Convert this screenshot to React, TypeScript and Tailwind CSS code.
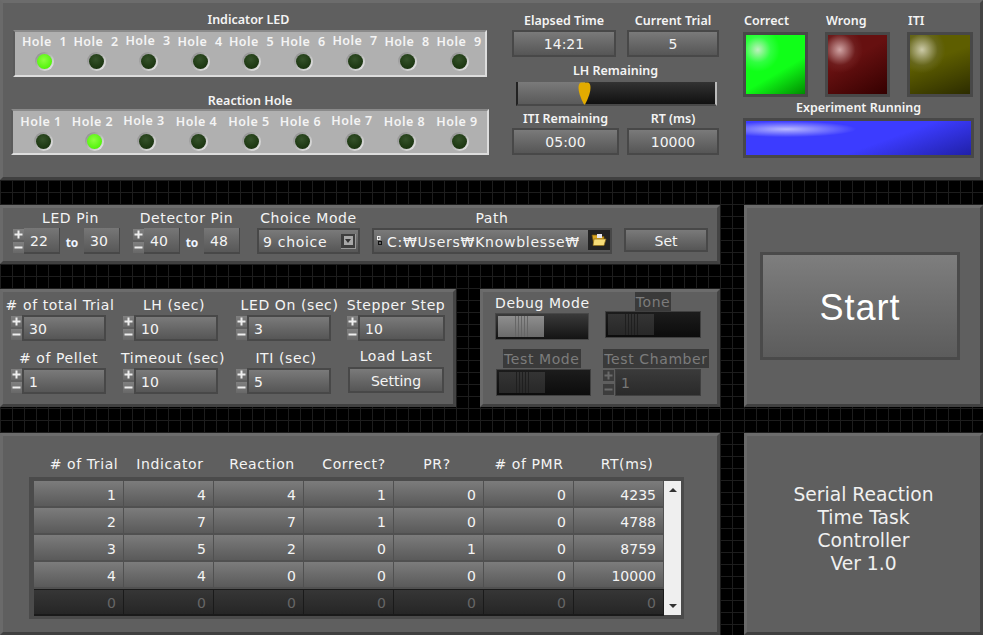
import React from "react";

const panel =
  "border-[3px] border-t-[#6c6c6c] border-l-[#6a6a6a] border-b-[#404040] border-r-[#444444] bg-[#5f5f5f]";
const raised = "border-2 border-[#484848] bg-linear-to-b from-[#7a7a7a] to-[#565656]";
const dejavu = "font-['DejaVu_Sans',sans-serif] text-[14px] text-[#f4f4f4] leading-none whitespace-nowrap";
const label = dejavu + " tracking-[0.6px]";
const tahoma = "font-['Noto_Sans',sans-serif] font-semibold text-[12.5px] text-[#f4f4f4] leading-none whitespace-nowrap";

function Led({ on }: { on?: boolean }) {
  return (
    <div className="w-[19px] h-[19px] rounded-full bg-linear-to-br from-[#858585] to-[#f0f0f0] flex items-center justify-center">
      <div
        className={
          on
            ? "w-[15px] h-[15px] rounded-full bg-[radial-gradient(circle_at_45%_40%,#8cff40,#58f510_65%,#3fd000)]"
            : "w-[15px] h-[15px] rounded-full bg-[radial-gradient(circle_at_45%_35%,#35522a,#1f3a14_60%,#142a0c)]"
        }
      />
    </div>
  );
}

function HoleRow({
  items,
  className,
  shift,
}: {
  items: { label: string; w: string; up?: boolean; on?: boolean }[];
  className: string;
  shift?: string;
}) {
  return (
    <div className={className}>
      {items.map((it) => (
        <div key={it.label} className={"flex flex-col items-center shrink-0 " + it.w}>
          <div className={"h-[14px] flex items-center justify-center whitespace-pre tracking-[0.5px] " + tahoma + (it.up ? " -mt-[1px] mb-[1px]" : "") + " " + (shift || "")}>
            {it.label}
          </div>
          <div className="mt-[3px]">
            <Led on={it.on} />
          </div>
        </div>
      ))}
    </div>
  );
}

function Spin({ h = 26, disabled }: { h?: number; disabled?: boolean }) {
  const btn = disabled
    ? "w-[11px] h-[11px] bg-[#3d3d3d] flex items-center justify-center text-[#6a6a6a]"
    : "w-[11px] h-[11px] bg-linear-to-b from-[#808080] to-[#686868] flex items-center justify-center text-[#eeeeee]";
  return (
    <div className={"flex flex-col justify-between shrink-0 py-[1px] " + (h === 26 ? "h-[26px]" : "h-[27px]")}>
      <div className={btn}>
        <svg width="9" height="9" viewBox="0 0 9 9">
          <path d="M0.5 3.5 H3.5 V0.5 H5.5 V3.5 H8.5 V5.5 H5.5 V8.5 H3.5 V5.5 H0.5 Z" fill="currentColor" />
        </svg>
      </div>
      <div className={btn}>
        <svg width="9" height="9" viewBox="0 0 9 9">
          <rect x="0.5" y="3.5" width="8" height="2" fill="currentColor" />
        </svg>
      </div>
    </div>
  );
}

function Num({ v, w }: { v: string; w: string }) {
  return (
    <div className={"h-[26px] flex items-center pt-[1px] pl-[6px] border-b-2 border-r border-[#484848] bg-linear-to-b from-[#777777] to-[#585858] " + w}>
      <span className={dejavu}>{v}</span>
    </div>
  );
}

function Field({ text, v, w, top, dy }: { text: string; v: string; w: string; top: string; dy?: string }) {
  return (
    <div className={"flex flex-col items-center shrink-0 " + w}>
      <div className={"pb-[3px] flex items-end justify-center " + top + " " + label + " " + (dy || "")}>{text}</div>
      <div className="flex w-full">
        <Spin />
        <div className={"flex-1 h-[26px] flex items-center pl-[5px] pt-[1px] " + raised}>
          <span className={dejavu}>{v}</span>
        </div>
      </div>
    </div>
  );
}

function Display({ text, v, w }: { text: string; v: string; w: string }) {
  return (
    <div className={"flex flex-col items-center " + w}>
      <div className={"h-[16px] flex items-center " + tahoma}>{text}</div>
      <div className={"mt-[1px] w-full h-[27px] flex items-center justify-center " + raised}>
        <span className={dejavu}>{v}</span>
      </div>
    </div>
  );
}

function Light({ text, c, w }: { text: string; c: string; w: string }) {
  return (
    <div className={"flex flex-col " + w}>
      <div className={"h-[16px] flex items-center pl-[1px] " + tahoma}>{text}</div>
      <div className="mt-[3px] h-[65px] border-[3px] border-[#484848]">
        <div className={"w-full h-full " + c} />
      </div>
    </div>
  );
}

function Toggle({ disabled, w }: { disabled?: boolean; w: string }) {
  return (
    <div
      className={
        "h-[27px] flex p-[2px] " +
        w +
        (disabled
          ? " border border-[#404040] bg-linear-to-b from-[#1c1c1c] to-[#0c0c0c]"
          : " border border-[#484848] bg-linear-to-b from-[#3a3a3a] to-[#141414]")
      }
    >
      <div
        className={
          "w-[46px] h-full flex items-center justify-center gap-[2px] " +
          (disabled ? "bg-linear-to-b from-[#343434] to-[#282828]" : "bg-linear-to-b from-[#8e8e8e] to-[#6c6c6c]")
        }
      >
        {[0, 1, 2, 3, 4].map((i) => (
          <div key={i} className={"w-[1px] h-full " + (disabled ? "bg-[#1f1f1f]" : "bg-[#666666]")} />
        ))}
      </div>
    </div>
  );
}

function DimLabel({ children }: { children: React.ReactNode }) {
  return (
    <div className="h-[19px] px-[1px] bg-[#3a3a3a] flex items-center font-['DejaVu_Sans',sans-serif] text-[14px] tracking-[0.6px] text-[#7c7c7c] leading-none whitespace-nowrap">
      {children}
    </div>
  );
}

const rows = [
  ["1", "4", "4", "1", "0", "0", "4235"],
  ["2", "7", "7", "1", "0", "0", "4788"],
  ["3", "5", "2", "0", "1", "0", "8759"],
  ["4", "4", "0", "0", "0", "0", "10000"],
];

const headers: [string, string][] = [
  ["# of Trial", "pl-[10px]"],
  ["Indicator", "pl-[2px]"],
  ["Reaction", "pl-[6px]"],
  ["Correct?", "pl-[10px]"],
  ["PR?", "pr-[4px]"],
  ["# of PMR", ""],
  ["RT(ms)", "pl-[16px]"],
];

export default function App() {
  const w52 = "w-[52px]";
  const topItems = [
    { label: "Hole  1", w: "w-[51px]", on: true },
    { label: "Hole  2", w: "w-[52px]" },
    { label: "Hole  3", w: w52, up: true },
    { label: "Hole  4", w: w52 },
    { label: "Hole  5", w: "w-[51px]" },
    { label: "Hole  6", w: w52 },
    { label: "Hole  7", w: w52, up: true },
    { label: "Hole  8", w: w52 },
    { label: "Hole  9", w: w52 },
  ];
  const botItems = [
    { label: "Hole 1", w: w52 },
    { label: "Hole 2", w: "w-[51px]", on: true },
    { label: "Hole 3", w: "w-[52px]", up: true },
    { label: "Hole 4", w: "w-[53px]" },
    { label: "Hole 5", w: w52 },
    { label: "Hole 6", w: "w-[51px]" },
    { label: "Hole 7", w: "w-[52px]", up: true },
    { label: "Hole 8", w: "w-[53px]" },
    { label: "Hole 9", w: w52 },
  ];

  return (
    <div className="w-[983px] h-[635px] overflow-hidden bg-black bg-[linear-gradient(#1d1d1d_1px,transparent_1px),linear-gradient(90deg,#1d1d1d_1px,transparent_1px)] bg-[size:12px_12px] grid grid-cols-[456px_24px_240px_24px_239px] grid-rows-[180px_25px_59px_25px_118px_26px_202px]">
      {/* Top panel */}
      <div className={panel + " col-span-5 flex pl-[8px]"}>
        <div className="w-[478px] flex flex-col">
          <div className={"h-[15px] mt-[10px] flex items-center justify-center pr-[3px] " + tahoma}>Indicator LED</div>
          <div className="ml-[2px] w-[474px] h-[47px] mt-[2px] bg-[#b0b0b0] border-2 border-l-[#5a5a5a] border-t-[#8a8a8a] border-r-[#dddddd] border-b-[#dddddd]">
            <HoleRow items={topItems} className="flex pl-[4px] pt-[3px]" />
          </div>
          <div className={"h-[15px] mt-[17px] flex items-center justify-center " + tahoma}>Reaction Hole</div>
          <div className="w-[478px] h-[46px] bg-[#b0b0b0] border-2 border-l-[#5a5a5a] border-t-[#8a8a8a] border-r-[#dddddd] border-b-[#dddddd]">
            <HoleRow items={botItems} className="flex pl-[4px] pt-[4px]" shift="pr-[4px]" />
          </div>
        </div>

        <div className="ml-[23px] w-[207px] flex flex-col pt-[10px]">
          <div className="flex gap-[11px]">
            <Display text="Elapsed Time" v="14:21" w="w-[104px]" />
            <Display text="Current Trial" v="5" w="w-[92px]" />
          </div>
          <div className={"h-[16px] mt-[6px] flex items-center justify-center " + tahoma}>LH Remaining</div>
          <div className="relative ml-[4px] w-[201px] h-[24px] mt-[3px] flex border-b-2 border-[#484848] border-l-2 border-r-2 border-r-[#bbbbbb] border-l-[#222222]">
            <div className="w-[67px] bg-linear-to-b from-[#7a7a7a] to-[#5a5a5a]" />
            <div className="flex-1 bg-linear-to-b from-[#333333] to-[#111111]" />
            <svg className="absolute left-[60px] top-0" width="13" height="23" viewBox="0 0 13 23">
              <path d="M3 0.5 H10 Q12.5 1 12.5 6 Q12.5 12 7 22.5 H6 Q0.5 12 0.5 6 Q0.5 1 3 0.5 Z" fill="#e2ab00" />
            </svg>
          </div>
          <div className="flex gap-[8px] mt-[5px]">
            <Display text="ITI Remaining" v="05:00" w="w-[107px]" />
            <Display text="RT (ms)" v="10000" w="w-[92px]" />
          </div>
        </div>

        <div className="ml-[24px] w-[231px] flex flex-col pt-[10px]">
          <div className="flex gap-[17px]">
            <Light text="Correct" w="w-[65px]" c="bg-[radial-gradient(circle_at_20%_25%,#c0f0c0,#30ff40_20%,transparent_34%),linear-gradient(150deg,#10ff18_60%,#008c00)]" />
            <Light text="Wrong" w="w-[65px]" c="bg-[radial-gradient(circle_at_20%_25%,#d0a4a4,#6e1c1c_24%,transparent_36%),linear-gradient(150deg,#661010_40%,#340000)]" />
            <Light text="ITI" w="w-[66px]" c="bg-[radial-gradient(circle_at_20%_25%,#cccaa8,#66661a_24%,transparent_36%),linear-gradient(160deg,#5e5e00_40%,#2c2c00)]" />
          </div>
          <div className={"h-[16px] mt-[3px] flex items-center justify-center " + tahoma}>Experiment Running</div>
          <div className="h-[40px] mt-[2px] border-[3px] border-[#484848]">
            <div className="w-full h-full bg-[radial-gradient(ellipse_70px_8px_at_18%_24%,#b8b8ff,transparent),linear-gradient(160deg,#3c3cff_60%,#2020a8)]" />
          </div>
        </div>
      </div>

      {/* Pin panel */}
      <div className={panel + " col-span-3 row-start-3 flex pl-[10px]"}>
        <div className="w-[107px] flex flex-col items-center shrink-0">
          <div className={"h-[20px] flex items-center pl-[8px] " + label}>LED Pin</div>
          <div className="flex w-full items-center">
            <Spin />
            <Num v="22" w="w-[36px]" />
            <span className="w-[24px] pt-[3px] text-center font-['Noto_Sans',sans-serif] font-bold text-[12px] text-[#eef4ff]">to</span>
            <Num v="30" w="w-[36px]" />
          </div>
        </div>
        <div className="ml-[13px] w-[107px] flex flex-col items-center shrink-0">
          <div className={"h-[20px] flex items-center " + label}>Detector Pin</div>
          <div className="flex w-full items-center">
            <Spin />
            <Num v="40" w="w-[36px]" />
            <span className="w-[24px] pt-[3px] text-center font-['Noto_Sans',sans-serif] font-bold text-[12px] text-[#eef4ff]">to</span>
            <Num v="48" w="w-[36px]" />
          </div>
        </div>
        <div className="ml-[17px] w-[103px] flex flex-col items-center shrink-0">
          <div className={"h-[20px] flex items-center " + label}>Choice Mode</div>
          <div className={"w-full h-[26px] flex items-center justify-between pl-[4px] pr-[2px] " + raised}>
            <span className={dejavu + " tracking-[0.7px] pt-[1px]"}>9 choice</span>
            <div className="w-[15px] h-[15px] bg-[#3e3e3e] border-r border-b border-[#999] flex items-center justify-center">
              <div className="w-[9px] h-[9px] bg-[#a8a8a8] flex items-center justify-center">
                <div className="w-0 h-0 border-l-[3px] border-r-[3px] border-t-[4px] border-l-transparent border-r-transparent border-t-[#333]" />
              </div>
            </div>
          </div>
        </div>
        <div className="ml-[12px] w-[240px] flex flex-col items-center shrink-0">
          <div className={"h-[20px] flex items-center " + label}>Path</div>
          <div className={"w-full h-[26px] flex items-center justify-between pl-[3px] " + raised}>
            <div className="flex items-center gap-[5px] overflow-hidden">
              <svg width="5" height="10" viewBox="0 0 5 10" className="shrink-0">
                <rect x="0.5" y="0.5" width="2.5" height="3" fill="none" stroke="#f0f0f0" />
                <rect x="1.5" y="5.5" width="3" height="3" fill="none" stroke="#111" />
              </svg>
              <span className={dejavu + " tracking-[0.75px] pt-[1px]"}>C:₩Users₩Knowblesse₩</span>
            </div>
            <div className="w-[22px] h-[20px] bg-[#222222] flex items-center justify-center shrink-0 mb-[2px]">
              <svg width="16" height="14" viewBox="0 0 16 14">
                <path d="M1 2 H6 L7.5 3.5 H13 V12 H3 Z" fill="#d9a520" stroke="#7a5a10" strokeWidth="0.7" />
                <path d="M3 6 H15 L13 12.5 H2 Z" fill="#f6dc78" stroke="#8a6a18" strokeWidth="0.7" />
                <path d="M6 1 H11 V5 H6 Z" fill="#e8e8f0" />
              </svg>
            </div>
          </div>
        </div>
        <div className={"ml-[12px] mt-[20px] w-[84px] h-[24px] pt-[1px] flex items-center justify-center " + raised}>
          <span className={dejavu}>Set</span>
        </div>
      </div>

      {/* Start panel */}
      <div className={panel + " col-start-5 row-start-3 row-span-3 flex flex-col pl-[13px] pt-[44px]"}>
        <div className="w-[200px] h-[108px] pt-[3px] border-[3px] border-[#4a4a4a] bg-linear-to-b from-[#7e7e7e] to-[#5c5c5c] flex items-center justify-center">
          <span className="font-['Liberation_Sans',sans-serif] text-[36px] tracking-[1px] text-white leading-none">Start</span>
        </div>
      </div>

      {/* Settings panel */}
      <div className={panel + " row-start-5 flex flex-col pl-[8px]"}>
        <div className="flex">
          <Field text="# of total Trial" v="30" top="h-[23px]" dy="pl-[3px]" w="w-[95px] mr-[17px]" />
          <Field text="LH (sec)" v="10" top="h-[23px]" dy="pl-[7px]" w="w-[95px] mr-[18px]" />
          <Field text="LED On (sec)" v="3" top="h-[23px]" dy="pl-[12px]" w="w-[95px] mr-[16px]" />
          <Field text="Stepper Step" v="10" top="h-[23px]" w="w-[98px]" />
        </div>
        <div className="flex">
          <Field text="# of Pellet" v="1" top="h-[27px]" w="w-[95px] mr-[17px]" />
          <Field text="Timeout (sec)" v="10" top="h-[27px]" dy="pl-[5px]" w="w-[95px] mr-[18px]" />
          <Field text="ITI (sec)" v="5" top="h-[27px]" dy="pl-[5px]" w="w-[95px] mr-[16px]" />
          <div className="w-[98px] flex flex-col items-center">
            <div className={"h-[26px] pb-[4px] flex items-end justify-center " + label}>Load Last</div>
            <div className={"w-[96px] h-[26px] pt-[1px] flex items-center justify-center " + raised}>
              <span className={dejavu}>Setting</span>
            </div>
          </div>
        </div>
      </div>

      {/* Debug panel */}
      <div className={panel + " col-start-3 row-start-5 flex flex-col pl-[12px]"}>
        <div className="flex">
          <div className="w-[110px] flex flex-col">
            <div className={"h-[21px] pb-[3px] flex items-end " + label}>Debug Mode</div>
            <Toggle w="w-[94px]" />
          </div>
          <div className="flex flex-col items-center w-[96px]">
            <DimLabel>Tone</DimLabel>
            <Toggle disabled w="w-[96px]" />
          </div>
        </div>
        <div className="flex mt-[9px]">
          <div className="w-[108px] flex flex-col items-start pl-[1px]">
            <div className="pl-[7px] mb-[1px]">
              <DimLabel>Test Mode</DimLabel>
            </div>
            <Toggle disabled w="w-[95px]" />
          </div>
          <div className="w-[106px] flex flex-col items-center">
            <div className="mb-[1px]">
              <DimLabel>Test Chamber</DimLabel>
            </div>
            <div className="flex self-start w-[98px]">
              <Spin h={27} disabled />
              <div className="flex-1 h-[27px] ml-[1px] pl-[5px] flex items-center bg-linear-to-b from-[#3a3a3a] to-[#2a2a2a] border border-[#404040]">
                <span className="font-['DejaVu_Sans',sans-serif] text-[14px] text-[#777] leading-none">1</span>
              </div>
            </div>
          </div>
        </div>
      </div>

      {/* Table panel */}
      <div className={panel + " col-span-3 row-start-7 flex flex-col pl-[26px]"}>
        <div className="h-[41px] pb-[6px] pl-[5px] flex items-end">
          {headers.map(([h, pad]) => (
            <div key={h} className={"w-[90px] flex justify-center " + pad + " " + label}>
              {h}
            </div>
          ))}
        </div>
        <div className="w-[655px] h-[142px] bg-[#4b4b4b] pl-[5px] pt-[4px] flex">
          <div className="flex flex-col w-[630px]">
            {rows.map((r, i) => (
              <div key={i} className="flex h-[27px]">
                {r.map((c, j) => (
                  <div
                    key={j}
                    className="w-[90px] h-[27px] pr-[7px] pt-[2px] flex items-center justify-end border-r border-b-2 border-[#505050] bg-linear-to-b from-[#7c7c7c] to-[#5a5a5a]"
                  >
                    <span className={dejavu}>{c}</span>
                  </div>
                ))}
              </div>
            ))}
            <div className="flex h-[27px]">
              {[0, 1, 2, 3, 4, 5, 6].map((j) => (
                <div
                  key={j}
                  className="w-[90px] h-[27px] pr-[7px] pt-[2px] flex items-center justify-end border-r border-b-2 border-t border-[#1a1a1a] bg-linear-to-b from-[#363636] to-[#262626]"
                >
                  <span className="font-['DejaVu_Sans',sans-serif] text-[14px] text-[#666666] leading-none">0</span>
                </div>
              ))}
            </div>
          </div>
          <div className="w-[17px] h-[134px] bg-[#efefef] flex flex-col items-center justify-between py-[7px]">
            <div className="w-0 h-0 border-l-[4px] border-r-[4px] border-b-[4px] border-l-transparent border-r-transparent border-b-[#333]" />
            <div className="w-0 h-0 border-l-[4px] border-r-[4px] border-t-[4px] border-l-transparent border-r-transparent border-t-[#333]" />
          </div>
        </div>
      </div>

      {/* Version panel */}
      <div className={panel + " col-start-5 row-start-7 flex flex-col items-center pt-[47px]"}>
        <div className="font-['DejaVu_Sans',sans-serif] text-[18.7px] leading-[23px] text-[#f0f0f0] text-center whitespace-nowrap">
          <div>Serial Reaction</div>
          <div>Time Task</div>
          <div>Controller</div>
          <div>Ver 1.0</div>
        </div>
      </div>
    </div>
  );
}
